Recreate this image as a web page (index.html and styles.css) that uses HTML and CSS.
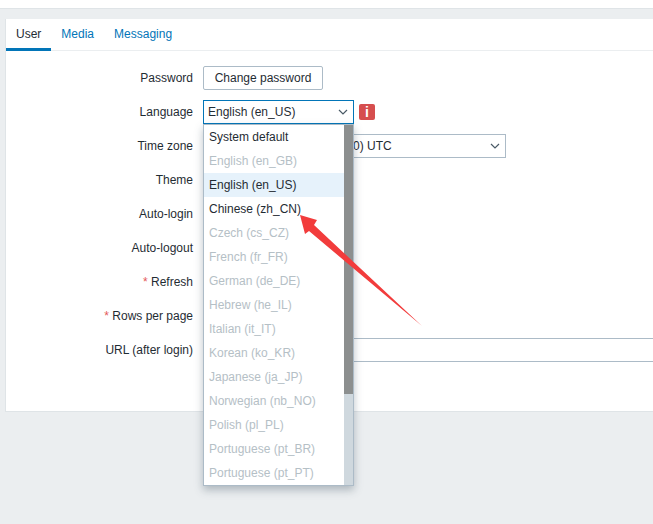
FILE: index.html
```html
<!DOCTYPE html>
<html>
  <head>
    <meta charset="UTF-8">
    <link rel="stylesheet" href="styles.css">
    <title>User profile</title>
  </head>
  <body>
    <div class="topbar"></div>
    <div class="panel">
      <div class="tabs">
        <a class="tab active">User</a>
        <a class="tab">Media</a>
        <a class="tab">Messaging</a>
      </div>
      <form class="form">
        <div class="row">
          <label class="label">Password</label>
          <div class="field"><button type="button" class="btn">Change password</button></div>
        </div>
        <div class="row">
          <label class="label">Language</label>
          <div class="field">
            <div class="select lang-select">
              <span>English (en_US)</span>
              <svg class="chevron" width="10" height="6" viewBox="0 0 10 6"><path d="M1 1l4 4 4-4" fill="none" stroke="#4a5a66" stroke-width="1.2"/></svg>
            </div>
            <span class="info-icon">i</span>
            <div class="dropdown">
              <ul class="options">
                <li class="option">System default</li>
                <li class="option off">English (en_GB)</li>
                <li class="option current">English (en_US)</li>
                <li class="option">Chinese (zh_CN)</li>
                <li class="option off">Czech (cs_CZ)</li>
                <li class="option off">French (fr_FR)</li>
                <li class="option off">German (de_DE)</li>
                <li class="option off">Hebrew (he_IL)</li>
                <li class="option off">Italian (it_IT)</li>
                <li class="option off">Korean (ko_KR)</li>
                <li class="option off">Japanese (ja_JP)</li>
                <li class="option off">Norwegian (nb_NO)</li>
                <li class="option off">Polish (pl_PL)</li>
                <li class="option off">Portuguese (pt_BR)</li>
                <li class="option off">Portuguese (pt_PT)</li>
              </ul>
              <div class="scrollbar"><div class="thumb"></div></div>
            </div>
          </div>
        </div>
        <div class="row">
          <label class="label">Time zone</label>
          <div class="field">
            <div class="select tz-select">
              <span>System default: (UTC+00:00) UTC</span>
              <svg class="chevron" width="10" height="6" viewBox="0 0 10 6"><path d="M1 1l4 4 4-4" fill="none" stroke="#4a5a66" stroke-width="1.2"/></svg>
            </div>
          </div>
        </div>
        <div class="row"><label class="label">Theme</label><div class="field"></div></div>
        <div class="row"><label class="label">Auto-login</label><div class="field"></div></div>
        <div class="row"><label class="label">Auto-logout</label><div class="field"></div></div>
        <div class="row"><label class="label"><span class="req">*</span> Refresh</label><div class="field"></div></div>
        <div class="row"><label class="label"><span class="req">*</span> Rows per page</label><div class="field"></div></div>
        <div class="row">
          <label class="label">URL (after login)</label>
          <div class="field"><div class="url-input"></div></div>
        </div>
      </form>
    </div>
    <svg class="arrow" width="653" height="524" viewBox="0 0 653 524">
      <polygon points="300,215 317,220 314,225 422,326 309,231 305,234" fill="#f23c3c"/>
    </svg>
  </body>
</html>
```

FILE: styles.css
```css
html, body {
    height: 100%;
}

body {
    margin: 0;
    background-color: #ebeef0;
    font-family: "Liberation Sans", Arial, sans-serif;
    font-size: 12px;
    color: #1f2c33;
    overflow: hidden;
}

.topbar {
    height: 8px;
    background-color: #fff;
    border-bottom: 1px solid #dfe4e7;
}

.panel {
    margin: 10px 0 0 5px;
    height: 393px;
    box-sizing: border-box;
    background-color: #fff;
    border: 1px solid #dfe4e7;
    border-top: none;
    border-right: none;
}

.tabs {
    display: flex;
    height: 31px;
    border-bottom: 1px solid #ebeef0;
}

.tab {
    padding: 0 10px;
    line-height: 31px;
    color: #0275b8;
}

.tab.active {
    color: #1f2c33;
    border-bottom: 3px solid #0275b8;
    height: 29px;
}

.form {
    display: flex;
    flex-direction: column;
    gap: 10px;
    padding-top: 15px;
}

.row {
    display: flex;
    height: 24px;
    align-items: center;
    gap: 10px;
}

.label {
    flex: none;
    width: 187px;
    text-align: right;
}

.req {
    color: #e45959;
}

.field {
    position: relative;
    display: flex;
    align-items: center;
    flex: 1;
    height: 24px;
    gap: 5px;
}

.btn {
    box-sizing: border-box;
    width: 120px;
    height: 24px;
    padding: 0;
    background-color: #fff;
    border: 1px solid #acbbc7;
    border-radius: 2px;
    font-family: inherit;
    font-size: 12px;
    color: #1f2c33;
}

.select {
    box-sizing: border-box;
    display: flex;
    align-items: center;
    justify-content: space-between;
    height: 24px;
    padding: 0 5px 0 4px;
    background-color: #fff;
    border: 1px solid #acbbc7;
}

.lang-select {
    width: 151px;
    border-color: #0275b8;
}

.tz-select {
    width: 303px;
}

.info-icon {
    width: 16px;
    height: 16px;
    background-color: #d64e4e;
    border-radius: 2px;
    color: #fff;
    font-size: 14px;
    font-weight: bold;
    line-height: 16px;
    text-align: center;
}

.dropdown {
    position: absolute;
    top: 24px;
    left: 0;
    z-index: 2;
    box-sizing: border-box;
    display: flex;
    width: 151px;
    height: 362px;
    background-color: #fff;
    border: 1px solid #acbbc7;
    box-shadow: 0 4px 8px rgba(60, 80, 95, 0.35);
}

.options {
    flex: 1;
    margin: 0;
    padding: 0;
    list-style: none;
}

.option {
    height: 24px;
    padding-left: 5px;
    line-height: 24px;
}

.option.off {
    color: #b5c0c6;
}

.option.current {
    background-color: #e6f2fb;
}

.scrollbar {
    width: 9px;
    background-color: #cfd8de;
}

.thumb {
    height: 269px;
    background-color: #8c8f8f;
}

.url-input {
    flex: 1;
    box-sizing: border-box;
    height: 24px;
    background-color: #fff;
    border: 1px solid #acbbc7;
    border-right: none;
}

.arrow {
    position: absolute;
    top: 0;
    left: 0;
    z-index: 3;
    pointer-events: none;
}
```
